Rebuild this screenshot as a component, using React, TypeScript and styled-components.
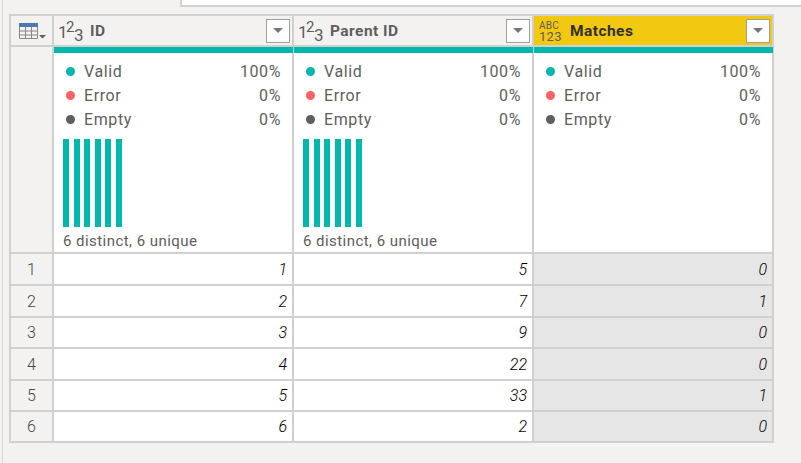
import React from 'react';
import styled, { createGlobalStyle } from 'styled-components';

const GlobalStyle = createGlobalStyle`
  html, body {
    margin: 0;
    padding: 0;
    background: #f3f2f1;
  }
  #root {
    width: 801px;
    height: 463px;
    overflow: hidden;
  }
`;

const Page = styled.div`
  width: 799px;
  height: 463px;
  box-sizing: border-box;
  margin-left: 2px;
  border-left: 1px solid #dcdad8;
  font-family: 'Roboto', 'Liberation Sans', sans-serif;
  color: #605e5c;
  display: flex;
  flex-direction: column;
`;

const FormulaBar = styled.div`
  height: 7px;
  flex: none;
  margin-left: 177px;
  box-sizing: border-box;
  background: #fff;
  border-left: 2px solid #d2d0ce;
  border-bottom: 2px solid #d2d0ce;
`;

const Table = styled.div`
  margin: 7px 0 0 6px;
  width: 765px;
  box-sizing: border-box;
  border-top: 2px solid #d2d0ce;
  border-left: 2px solid #d2d0ce;
  display: grid;
  grid-template-columns: 43px repeat(3, 240px);
  grid-template-rows: 31px 207px 32px 32px 31px 32px 31px 31px;
`;

const CornerCell = styled.div`
  background: #f3f2f1;
  border-right: 2px solid #d2d0ce;
  border-bottom: 2px solid #d2d0ce;
  display: flex;
  align-items: center;
  justify-content: center;
  padding-left: 2px;
`;

const HeaderCell = styled.div<{ $selected?: boolean }>`
  background: ${p => (p.$selected ? '#f2c811' : '#f3f2f1')};
  border-right: 2px solid #d2d0ce;
  border-bottom: 2px solid #d2d0ce;
  display: flex;
  align-items: center;
  padding: 1px 2px 0 4px;
  color: ${p => (p.$selected ? '#323130' : '#605e5c')};
  font-size: 15.5px;
  font-weight: 700;
  letter-spacing: 0.45px;
`;

const TypeIcon = styled.span`
  display: flex;
  width: 24px;
  height: 24px;
  margin-right: 8px;
  flex: none;
  font-weight: 400;
  letter-spacing: 0;
  color: #605e5c;
`;

const Digit = styled.span<{ $size: number; $top: number; $width: number }>`
  display: block;
  width: ${p => p.$width}px;
  font-size: ${p => p.$size}px;
  line-height: ${p => p.$size}px;
  margin-top: ${p => p.$top}px;
`;

const StackedIcon = styled(TypeIcon)`
  flex-direction: column;
  padding-top: 2px;
  box-sizing: border-box;
`;

const StackedLine = styled.span<{ $size: number; $height: number; $left: number }>`
  display: block;
  font-size: ${p => p.$size}px;
  line-height: ${p => p.$height}px;
  height: ${p => p.$height}px;
  margin-left: ${p => p.$left}px;
  letter-spacing: 0.3px;
`;

const HeaderTitle = styled.span`
  flex: 1;
`;

const FilterButton = styled.div`
  width: 24px;
  height: 24px;
  box-sizing: border-box;
  background: #fff;
  border: 1px solid #a19f9d;
  display: flex;
  align-items: center;
  justify-content: center;
  padding-bottom: 2px;
  &::after {
    content: '';
    border-left: 5px solid transparent;
    border-right: 5px solid transparent;
    border-top: 5px solid #797775;
  }
`;

const QualityGutter = styled.div`
  background: #f3f2f1;
  border-right: 2px solid #d2d0ce;
  border-bottom: 2px solid #d2d0ce;
`;

const QualityCell = styled.div`
  background: #fff;
  border-right: 2px solid #d2d0ce;
  border-bottom: 2px solid #d2d0ce;
  display: flex;
  flex-direction: column;
`;

const ValidBar = styled.div`
  height: 6px;
  margin-right: -1px;
  background: #01b8aa;
`;

const QualityList = styled.div`
  padding: 6px 11px 0 12px;
`;

const QualityRow = styled.div`
  display: flex;
  align-items: center;
  height: 24px;
  font-size: 16px;
  letter-spacing: 0.6px;
`;

const Dot = styled.span<{ $color: string }>`
  width: 9px;
  height: 9px;
  border-radius: 50%;
  background: ${p => p.$color};
  margin-right: 9px;
`;

const QualityLabel = styled.span`
  flex: 1;
`;

const Histogram = styled.div`
  display: flex;
  gap: 4.6px;
  height: 88px;
  margin: 8px 0 0 9px;
`;

const HistogramBar = styled.div`
  width: 6px;
  background: #01b8aa;
`;

const DistinctText = styled.div`
  margin: 5px 0 0 9px;
  font-size: 15px;
  line-height: 18px;
  letter-spacing: 0.45px;
`;

const RowNumber = styled.div`
  background: #f3f2f1;
  border-right: 2px solid #d2d0ce;
  border-bottom: 2px solid #d2d0ce;
  display: flex;
  align-items: center;
  justify-content: center;
  font-size: 16px;
  font-weight: 300;
  color: #484644;
`;

const DataCell = styled.div<{ $selected?: boolean }>`
  background: ${p => (p.$selected ? '#e6e6e6' : '#fff')};
  border-right: 2px solid #d2d0ce;
  border-bottom: 2px solid #d2d0ce;
  display: flex;
  align-items: center;
  justify-content: flex-end;
  padding-right: 5px;
  font-size: 16px;
  font-weight: 300;
  font-style: italic;
  color: #000;
`;

const TableIcon = () => (
  <svg width="27" height="16" viewBox="0 0 27 16">
    <rect x="0" y="0" width="19" height="4" fill="#4a7ab5" />
    <path d="M.5 4v11.5h18V4M.5 8h18M.5 12h18M6.5 4v11.5M12.5 4v11.5" fill="none" stroke="#8a8886" />
    <path d="M20 12h7l-3.5 3.5z" fill="#605e5c" />
  </svg>
);

const WholeNumberIcon = () => (
  <TypeIcon>
    <Digit $size={17} $top={5} $width={8}>1</Digit>
    <Digit $size={15} $top={1} $width={8}>2</Digit>
    <Digit $size={17} $top={8} $width={8}>3</Digit>
  </TypeIcon>
);

const AnyTypeIcon = () => (
  <StackedIcon>
    <StackedLine $size={10} $height={10} $left={1}>ABC</StackedLine>
    <StackedLine $size={13} $height={12} $left={1}>123</StackedLine>
  </StackedIcon>
);

const columns = [
  { title: 'ID', values: ['1', '2', '3', '4', '5', '6'], histogram: true },
  { title: 'Parent ID', values: ['5', '7', '9', '22', '33', '2'], histogram: true },
  { title: 'Matches', values: ['0', '1', '0', '0', '1', '0'], histogram: false, selected: true },
];

const quality = [
  { label: 'Valid', value: '100%', color: '#01b8aa' },
  { label: 'Error', value: '0%', color: '#fd625e' },
  { label: 'Empty', value: '0%', color: '#605e5c' },
];

const rowNumbers = [1, 2, 3, 4, 5, 6];

const App: React.FC = () => (
  <>
    <GlobalStyle />
    <Page>
      <FormulaBar />
      <Table>
        <CornerCell>
          <TableIcon />
        </CornerCell>
        {columns.map(col => (
          <HeaderCell key={col.title} $selected={col.selected}>
            {col.selected ? <AnyTypeIcon /> : <WholeNumberIcon />}
            <HeaderTitle>{col.title}</HeaderTitle>
            <FilterButton />
          </HeaderCell>
        ))}

        <QualityGutter />
        {columns.map(col => (
          <QualityCell key={col.title}>
            <ValidBar />
            <QualityList>
              {quality.map(q => (
                <QualityRow key={q.label}>
                  <Dot $color={q.color} />
                  <QualityLabel>{q.label}</QualityLabel>
                  <span>{q.value}</span>
                </QualityRow>
              ))}
            </QualityList>
            {col.histogram && (
              <>
                <Histogram>
                  {col.values.map((_, i) => (
                    <HistogramBar key={i} />
                  ))}
                </Histogram>
                <DistinctText>6 distinct, 6 unique</DistinctText>
              </>
            )}
          </QualityCell>
        ))}

        {rowNumbers.map((n, r) => (
          <React.Fragment key={n}>
            <RowNumber>{n}</RowNumber>
            {columns.map(col => (
              <DataCell key={col.title} $selected={col.selected}>
                {col.values[r]}
              </DataCell>
            ))}
          </React.Fragment>
        ))}
      </Table>
    </Page>
  </>
);

export default App;
